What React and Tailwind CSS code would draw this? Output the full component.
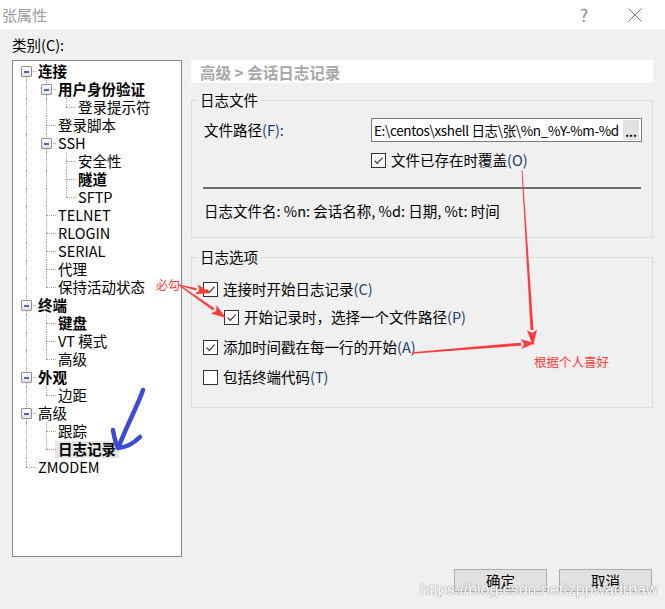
import React from 'react';

const TREE = [
  {
    label: '连接', bold: true, children: [
      { label: '用户身份验证', bold: true, children: [{ label: '登录提示符' }] },
      { label: '登录脚本' },
      { label: 'SSH', children: [{ label: '安全性' }, { label: '隧道', bold: true }, { label: 'SFTP' }] },
      { label: 'TELNET' },
      { label: 'RLOGIN' },
      { label: 'SERIAL' },
      { label: '代理' },
      { label: '保持活动状态' },
    ],
  },
  { label: '终端', bold: true, children: [{ label: '键盘', bold: true }, { label: 'VT 模式' }, { label: '高级' }] },
  { label: '外观', bold: true, children: [{ label: '边距' }] },
  { label: '高级', children: [{ label: '跟踪' }, { label: '日志记录', bold: true, selected: true }] },
  { label: 'ZMODEM' },
];

const flatten = (nodes, guides = [], out = [], root = true) => {
  nodes.forEach((node, i) => {
    const isLast = i === nodes.length - 1;
    out.push({ node, guides, isLast, isFirst: root && i === 0 });
    if (node.children) flatten(node.children, [...guides, !isLast], out, false);
  });
  return out;
};

const ROWS = flatten(TREE);

const dot = 'absolute border-dotted border-[#a0a0a0]';

const TreeRow = ({ row }) => {
  const { node, guides, isLast, isFirst } = row;
  return (
    <div className="flex h-[18px] items-center">
      {guides.map((cont, i) => (
        <div key={i} className="relative h-full w-[20px] shrink-0">
          {cont && <div className={`${dot} left-[10px] top-0 bottom-0 border-l`} />}
        </div>
      ))}
      <div className="relative h-full w-[20px] shrink-0">
        {!isFirst && <div className={`${dot} left-[10px] top-0 h-[9px] border-l`} />}
        {!isLast && <div className={`${dot} left-[10px] top-[9px] bottom-0 border-l`} />}
        <div className={`${dot} left-[10px] right-0 top-[9px] border-t`} />
        {node.children && (
          <div className="absolute left-[5px] top-[4px] flex h-[11px] w-[11px] items-center justify-center rounded-[1px] border border-[#919191] bg-gradient-to-b from-white to-[#e2e2e2]">
            <div className="h-[2px] w-[5px] bg-[#4a67bd]" />
          </div>
        )}
      </div>
      <span
        className={`ml-[-1px] flex h-[17px] items-center whitespace-nowrap px-[3px] text-[14.5px] leading-[18px] text-black ${node.bold ? 'font-bold' : ''} ${node.selected ? 'bg-[#e6e6e6]' : ''}`}
      >
        {node.label}
      </span>
    </div>
  );
};

const CheckBox = ({ checked }) => (
  <span className="flex h-[15px] w-[15px] shrink-0 items-center justify-center border border-[#333333] bg-white">
    {checked && (
      <svg width="11" height="11" viewBox="0 0 11 11">
        <path d="M1.5 5.6 L4.3 8.3 L9.6 2.6" fill="none" stroke="#3a3a3a" strokeWidth="1.2" />
      </svg>
    )}
  </span>
);

const CheckRow = ({ checked, label, hot, className = '' }) => (
  <div className={`flex h-[18px] items-center ${className}`}>
    <CheckBox checked={checked} />
    <span className="ml-[5px] whitespace-nowrap text-[14.5px] leading-[18px]">
      {label}
      <span className="text-[#1a3d6e]">({hot})</span>
    </span>
  </div>
);

const RED = '#ff3a3a';

// tapered shaft plus a filled head, ending at the tip
const Arrow = ({ from, to, w0 = 1.5, w1 = 2.5, len = 14, hw = 5 }) => {
  const [x0, y0] = from;
  const [x1, y1] = to;
  const L = Math.hypot(x1 - x0, y1 - y0);
  const ux = (x1 - x0) / L;
  const uy = (y1 - y0) / L;
  const nx = -uy;
  const ny = ux;
  const bx = x1 - ux * len;
  const by = y1 - uy * len;
  const shaft = [
    [x0 + (nx * w0) / 2, y0 + (ny * w0) / 2],
    [bx + (nx * w1) / 2, by + (ny * w1) / 2],
    [bx - (nx * w1) / 2, by - (ny * w1) / 2],
    [x0 - (nx * w0) / 2, y0 - (ny * w0) / 2],
  ];
  const head = [
    [x1, y1],
    [bx + nx * hw, by + ny * hw],
    [bx + ux * 3, by + uy * 3],
    [bx - nx * hw, by - ny * hw],
  ];
  const pts = (a) => a.map((p) => p.join(',')).join(' ');
  return (
    <g fill={RED}>
      <polygon points={pts(shaft)} />
      <polygon points={pts(head)} />
    </g>
  );
};

const App = () => {
  return (
    <div className="relative h-[609px] w-[665px] overflow-hidden bg-[#f0f0f0] font-['Noto_Sans_CJK_SC','Noto_Sans',sans-serif] text-black">
      {/* title bar */}
      <div className="flex h-[29px] items-center bg-white">
        <span className="ml-[2px] text-[15px] leading-[18px] text-[#9a9a9a]">张属性</span>
        <span className="ml-auto mr-[40px] text-[17px] leading-[18px] text-[#8a8a8a]">?</span>
        <svg className="mr-[23px]" width="14" height="14" viewBox="0 0 14 14">
          <path d="M0.5 0.5 L13.5 13.5 M13.5 0.5 L0.5 13.5" stroke="#7a7a7a" strokeWidth="1" />
        </svg>
      </div>

      <div className="px-[12px]">
        <div className="mt-[7px] h-[18px] text-[14.5px] leading-[18px]">类别(C):</div>

        <div className="mt-[6px] flex">
          {/* category tree */}
          <div className="h-[497px] w-[170px] shrink-0 overflow-hidden border border-[#828790] bg-white pl-[3px] pt-px">
            {ROWS.map((row, i) => (
              <TreeRow key={i} row={row} />
            ))}
          </div>

          {/* settings page */}
          <div className="ml-[9px] w-[462px]">
            <div className="flex h-[23px] items-center bg-white pl-[9px] text-[15.5px] font-semibold leading-[18px] text-[#a8a8a8]">
              高级 &gt; 会话日志记录
            </div>

            <fieldset className="mt-[8px] border border-[#dcdcdc]">
              <legend className="ml-[5px] px-[3px] text-[14.5px] leading-[18px]">日志文件</legend>
              <div className="pb-[17px] pl-[12px] pr-[10px]">
                <div className="mt-[9px] grid grid-cols-[167px_271px] items-center">
                  <span className="text-[14.5px] leading-[18px]">
                    文件路径<span className="text-[#1a3d6e]">(F):</span>
                  </span>
                  <div className="flex h-[24px] items-center border border-[#7a7a7a] bg-white">
                    <span className="min-w-0 flex-1 overflow-hidden whitespace-nowrap pl-[2px] text-[13.5px] leading-[18px] tracking-[-0.35px]">
                      E:\centos\xshell 日志\张\%n_%Y-%m-%d
                    </span>
                    <span className="mr-[2px] flex h-[20px] w-[16px] shrink-0 items-end justify-center bg-[#e1e1e1] pb-[3px] text-[12px] font-bold leading-[10px]">
                      ...
                    </span>
                  </div>
                  <div className="col-start-2 mt-[9px]">
                    <CheckRow checked label="文件已存在时覆盖" hot="O" />
                  </div>
                </div>
                <div className="ml-[-1px] mr-px mt-[18px] h-[2px] bg-[#6e6e6e]" />
                <div className="mt-[13px] h-[18px] whitespace-nowrap text-[14.5px] leading-[18px]">
                  日志文件名: %n: 会话名称, %d: 日期, %t: 时间
                </div>
              </div>
            </fieldset>

            <fieldset className="mt-[10px] border border-[#dcdcdc]">
              <legend className="ml-[5px] px-[3px] text-[14.5px] leading-[18px]">日志选项</legend>
              <div className="pb-[21px] pl-[11px]">
                <CheckRow className="mt-[14px]" checked label="连接时开始日志记录" hot="C" />
                <CheckRow className="mt-[10px] pl-[21px]" checked label="开始记录时，选择一个文件路径" hot="P" />
                <CheckRow className="mt-[12px]" checked label="添加时间戳在每一行的开始" hot="A" />
                <CheckRow className="mt-[12px]" label="包括终端代码" hot="T" />
              </div>
            </fieldset>
          </div>
        </div>

        <div className="mt-[12px] flex justify-end gap-[12px] pr-[1px]">
          <button className="flex h-[23px] w-[93px] items-center justify-center border border-[#adadad] bg-[#e1e1e1] text-[14.5px] leading-[18px]">
            确定
          </button>
          <button className="flex h-[23px] w-[93px] items-center justify-center border border-[#adadad] bg-[#e1e1e1] text-[14.5px] leading-[18px]">
            取消
          </button>
        </div>
      </div>

      {/* hand-drawn annotations on top of the screenshot */}
      <svg className="pointer-events-none absolute inset-0" width="665" height="609" viewBox="0 0 665 609">
        <Arrow from={[179, 285]} to={[211, 293]} w0={1} w1={2.5} len={15} hw={5} />
        <Arrow from={[179, 285]} to={[226, 318]} w0={1} w1={2.5} len={15} hw={5} />
        <Arrow from={[522, 170]} to={[533, 346]} w0={0.8} w1={3} len={16} hw={5} />
        <Arrow from={[412, 353]} to={[535, 343]} w0={1.5} w1={3} len={14} hw={5} />
        <path
          d="M143 390 C138 405 127 425 119 446 M113 430 Q115 442 118 448 Q130 447 140 437"
          fill="none"
          stroke="#3b4bd3"
          strokeWidth="4.5"
          strokeLinecap="round"
          strokeLinejoin="round"
        />
      </svg>
      <span className="absolute left-[156px] top-[278px] text-[12px] leading-[14px] text-[#ff3a3a]">必勾</span>
      <span className="absolute left-[534px] top-[354px] text-[12.5px] leading-[16px] text-[#ff3a3a]">根据个人喜好</span>
      <span className="absolute left-[420px] top-[581px] font-['Liberation_Sans',sans-serif] text-[16px] leading-[18px] text-white [text-shadow:0_0_1px_#8c8c8c,0_0_1px_#8c8c8c]">
        https://blog.csdn.net/zppwadrbaw
      </span>
    </div>
  );
};

export default App;
